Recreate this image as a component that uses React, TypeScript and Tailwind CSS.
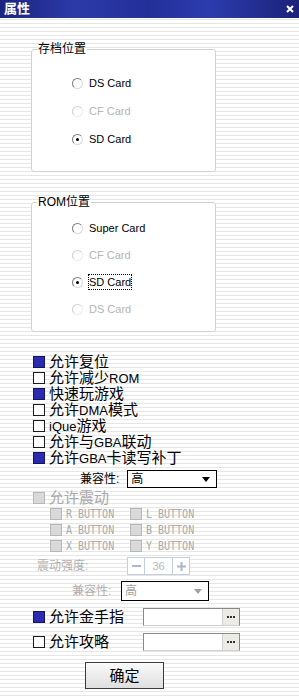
import type { ReactNode } from 'react';

const cjk = "font-['Liberation_Sans','Noto_Sans_CJK_SC',sans-serif]";

function Radio({ checked = false, disabled = false }: { checked?: boolean; disabled?: boolean }) {
  return (
    <span
      className={`relative inline-block w-[11px] h-[11px] rounded-full border bg-white ${
        disabled
          ? 'border-t-[#cfcfcf] border-l-[#cfcfcf] border-r-[#ececec] border-b-[#ececec]'
          : 'border-t-[#7c7c7c] border-l-[#7c7c7c] border-r-[#dadada] border-b-[#dadada]'
      }`}
    >
      {checked && <span className="absolute left-[3px] top-[3px] w-[3px] h-[3px] rounded-full bg-black" />}
    </span>
  );
}

function RadioRow({ label, checked, disabled, focus }: { label: string; checked?: boolean; disabled?: boolean; focus?: boolean }) {
  return (
    <div className="flex items-center h-[16px] gap-[6px]">
      <Radio checked={checked} disabled={disabled} />
      <span
        className={`text-[11px] leading-[14px] ${disabled ? 'text-[#b4b4b4]' : 'text-black'} ${
          focus ? 'outline-1 outline-dotted outline-black' : ''
        }`}
      >
        {label}
      </span>
    </div>
  );
}

function Box({ checked = false }: { checked?: boolean }) {
  return (
    <span
      className={`inline-block w-[12px] h-[12px] border ${
        checked ? 'bg-[#2b2bb0] border-[#15155e]' : 'bg-white border-[#1a1a1a]'
      }`}
    />
  );
}

function CheckRow({ checked, children }: { checked?: boolean; children: ReactNode }) {
  return (
    <div className="flex items-center h-[16px] gap-[4px]">
      <Box checked={checked} />
      <span className="text-[15px] leading-[16px] text-black whitespace-nowrap">{children}</span>
    </div>
  );
}

function Latin({ children }: { children: ReactNode }) {
  return <span className="text-[13px]">{children}</span>;
}

function GrayBox() {
  return <span className="inline-block w-[12px] h-[12px] bg-[#d9d9d9] border border-[#b8b8b8]" />;
}

function Btn({ label }: { label: string }) {
  return (
    <div className="flex items-center gap-[4px] w-[80px]">
      <GrayBox />
      <span className="inline-block font-['DejaVu_Sans_Mono',monospace] text-[10px] leading-[14px] text-[#a8a8a8] scale-y-125 whitespace-nowrap">
        {label}
      </span>
    </div>
  );
}

function Select({ disabled = false, w }: { disabled?: boolean; w: string }) {
  return (
    <div className={`flex items-center justify-between border border-black bg-white h-full ${w} pl-[3px] pr-[6px]`}>
      <span className={`text-[12px] leading-[14px] ${disabled ? 'text-[#a0a0a0]' : 'text-black'}`}>高</span>
      <svg width="8" height="5" viewBox="0 0 8 5">
        <path d="M0 0h8L4 5z" fill={disabled ? '#a0a0a0' : '#000'} />
      </svg>
    </div>
  );
}

function PathField() {
  return (
    <div className="flex h-full w-[97px] border border-[#8a8a8a] border-b-[#d0d0d0] bg-white">
      <div className="flex-1 bg-white" />
      <div className="flex items-center justify-center gap-[1px] w-[17px] bg-[#ecebe6] border-l border-[#d0d0d0]">
        <span className="w-[2px] h-[2px] bg-[#303030]" />
        <span className="w-[2px] h-[2px] bg-[#303030]" />
        <span className="w-[2px] h-[2px] bg-[#303030]" />
      </div>
    </div>
  );
}

export default function App() {
  return (
    <div
      className={`w-[299px] h-[696px] overflow-hidden ${cjk} bg-[repeating-linear-gradient(to_bottom,#ffffff_0px,#ffffff_3px,#e6e6e6_3px,#e6e6e6_4px)]`}
    >
      {/* title bar */}
      <div className="flex items-center justify-between h-[18px] pl-[4px] pr-[5px] bg-[linear-gradient(90deg,#1b2480_0%,#2c3aa8_25%,#23309a_50%,#2d3cae_70%,#1a2278_100%)]">
        <span className="text-[13px] leading-[16px] font-bold text-white">属性</span>
        <svg width="8" height="8" viewBox="0 0 8 8">
          <path d="M1 1l6 6M7 1L1 7" stroke="#fff" strokeWidth="2" />
        </svg>
      </div>

      {/* 存档位置 */}
      <fieldset className="ml-[31px] mt-[24px] w-[185px] h-[130px] border border-[#d2d2cc] rounded-[3px] bg-white pl-[40px]">
        <legend className="-ml-[35px] px-[1px] text-[12px] leading-[14px] text-black">存档位置</legend>
        <div className="flex flex-col gap-[12px] mt-[19px]">
          <RadioRow label="DS Card" />
          <RadioRow label="CF Card" disabled />
          <RadioRow label="SD Card" checked />
        </div>
      </fieldset>

      {/* ROM位置 */}
      <fieldset className="ml-[31px] mt-[23px] w-[185px] h-[137px] border border-[#d2d2cc] rounded-[3px] bg-white pl-[40px]">
        <legend className="-ml-[35px] px-[1px] text-[12px] leading-[14px] text-black">ROM位置</legend>
        <div className="flex flex-col gap-[11px] mt-[11px]">
          <RadioRow label="Super Card" />
          <RadioRow label="CF Card" disabled />
          <RadioRow label="SD Card" checked focus />
          <RadioRow label="DS Card" disabled />
        </div>
      </fieldset>

      {/* options */}
      <div className="flex flex-col mt-[22px] pl-[33px]">
        <CheckRow checked>允许复位</CheckRow>
        <CheckRow>
          允许减少<Latin>ROM</Latin>
        </CheckRow>
        <CheckRow checked>快速玩游戏</CheckRow>
        <CheckRow>
          允许<Latin>DMA</Latin>模式
        </CheckRow>
        <CheckRow>
          <Latin>iQue</Latin>游戏
        </CheckRow>
        <CheckRow>
          允许与<Latin>GBA</Latin>联动
        </CheckRow>
        <CheckRow checked>
          允许<Latin>GBA</Latin>卡读写补丁
        </CheckRow>
      </div>

      <div className="flex items-center h-[18px] mt-[4px] pl-[80px] gap-[8px]">
        <span className="text-[12px] leading-[14px] text-black">兼容性:</span>
        <Select w="w-[90px]" />
      </div>

      {/* 震动 */}
      <div className="flex items-center h-[16px] mt-[2px] pl-[33px] gap-[4px]">
        <GrayBox />
        <span className="text-[15px] leading-[16px] text-[#a8a8a8]">允许震动</span>
      </div>
      <div className="flex flex-col pl-[50px]">
        <div className="flex items-center h-[16px]">
          <Btn label="R BUTTON" />
          <Btn label="L BUTTON" />
        </div>
        <div className="flex items-center h-[16px]">
          <Btn label="A BUTTON" />
          <Btn label="B BUTTON" />
        </div>
        <div className="flex items-center h-[16px]">
          <Btn label="X BUTTON" />
          <Btn label="Y BUTTON" />
        </div>
      </div>

      <div className="flex items-center h-[18px] mt-[3px] pl-[37px]">
        <span className="w-[90px] text-[12px] leading-[14px] text-[#b0b0b0]">震动强度:</span>
        <div className="flex h-full w-[63px] border border-[#c4cedf] bg-white">
          <div className="flex items-center justify-center w-[17px] border-r border-[#c4cedf]">
            <span className="block w-[9px] h-[2px] bg-[#a9b6cc]" />
          </div>
          <div className="flex-1 flex items-center justify-center text-[11px] leading-[14px] text-[#b8b8b8]">36</div>
          <div className="flex items-center justify-center w-[17px] border-l border-[#c4cedf]">
            <svg width="9" height="9" viewBox="0 0 9 9">
              <path d="M4.5 0v9M0 4.5h9" stroke="#a9b6cc" strokeWidth="2" />
            </svg>
          </div>
        </div>
      </div>

      <div className="flex items-center h-[20px] mt-[6px] pl-[72px] gap-[8px]">
        <span className="w-[41px] text-[12px] leading-[14px] text-[#b0b0b0]">兼容性:</span>
        <Select disabled w="w-[88px]" />
      </div>

      {/* 金手指 / 攻略 */}
      <div className="flex items-center h-[18px] mt-[7px] pl-[33px]">
        <div className="flex items-center gap-[4px] w-[110px]">
          <Box checked />
          <span className="text-[15px] leading-[16px] text-black">允许金手指</span>
        </div>
        <PathField />
      </div>
      <div className="flex items-center h-[18px] mt-[7px] pl-[33px]">
        <div className="flex items-center gap-[4px] w-[110px]">
          <Box />
          <span className="text-[15px] leading-[16px] text-black">允许攻略</span>
        </div>
        <PathField />
      </div>

      <div className="pl-[85px] mt-[11px]">
        <button className="w-[79px] h-[27px] border border-[#3a3a3a] bg-[linear-gradient(#fafafa,#dedede)] text-[15px] leading-[16px] text-black">
          确定
        </button>
      </div>
    </div>
  );
}
